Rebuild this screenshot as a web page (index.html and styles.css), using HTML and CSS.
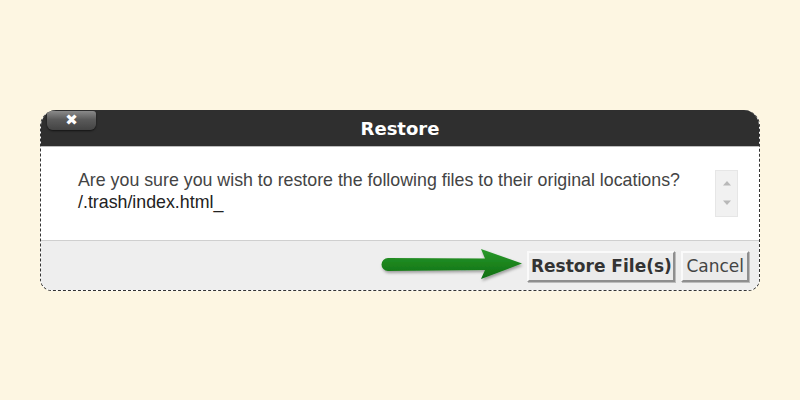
FILE: index.html
```html
<!DOCTYPE html>
<html>
<head>
<meta charset="utf-8">
<link rel="stylesheet" href="styles.css">
</head>
<body>
<div class="dialog">
  <div class="header">
    <div class="close">&#x2716;</div>
    <div class="title">Restore</div>
  </div>
  <div class="body">
    <div class="msg">
      <div>Are you sure you wish to restore the following files to their original locations?</div>
      <div>/.trash/index.html_</div>
    </div>
    <div class="scroll">
      <svg width="10" height="6" viewBox="0 0 10 6"><path d="M1 5.5 L5 1 L9 5.5 Z" fill="#b8b8b8"/></svg>
      <svg width="10" height="6" viewBox="0 0 10 6"><path d="M1 0.5 L5 5 L9 0.5 Z" fill="#b8b8b8"/></svg>
    </div>
  </div>
  <div class="footer">
    <svg class="arrow" width="150" height="36" viewBox="0 0 150 36">
      <defs>
        <filter id="sh" x="-10%" y="-30%" width="120%" height="160%">
          <feDropShadow dx="1" dy="2" stdDeviation="1.5" flood-color="#000" flood-opacity="0.35"/>
        </filter>
        <linearGradient id="g" x1="0" y1="0" x2="0" y2="1">
          <stop offset="0" stop-color="#2a9a2a"/>
          <stop offset="1" stop-color="#0e6e12"/>
        </linearGradient>
      </defs>
      <path filter="url(#sh)" fill="url(#g)" d="M9 10 L106 10.5 L102 1 L143 15.5 L102 31 L106 22 L9 23 A6.5 6.5 0 0 1 9 10 Z"/>
    </svg>
    <button class="btn primary">Restore File(s)</button>
    <button class="btn">Cancel</button>
  </div>
</div>
</body>
</html>
```
FILE: styles.css
```css
html, body {
  margin: 0;
  padding: 0;
}
body {
  background: #fdf6e2;
  width: 800px;
  height: 400px;
  overflow: hidden;
  font-family: "Liberation Sans", Arial, sans-serif;
}
.dialog {
  margin: 110px 0 0 40px;
  width: 718px;
  border: 1px dashed #333;
  border-top: none;
  border-radius: 16px 16px 12px 12px;
  background: #fff;
  overflow: hidden;
}
.header {
  position: relative;
  height: 36px;
  background: #2f2f2f;
  border-bottom: 1px solid #bdbdbd;
  display: flex;
  align-items: center;
  justify-content: center;
}
.close {
  position: absolute;
  left: 6px;
  top: 1px;
  width: 49px;
  height: 19px;
  border-radius: 3px 3px 6px 6px;
  background: linear-gradient(#8a8a8a, #5a5a5a 45%, #444 100%);
  box-shadow: 0 1px 2px rgba(0,0,0,0.6);
  color: #fff;
  font-family: "DejaVu Sans", sans-serif;
  font-size: 15px;
  line-height: 19px;
  text-align: center;
}
.title {
  color: #fff;
  font-family: "DejaVu Sans", Verdana, sans-serif;
  font-weight: bold;
  font-size: 18px;
  margin-top: 1px;
}
.body {
  height: 93px;
  display: flex;
  padding: 0 20px 0 37px;
}
.msg {
  flex: 1;
  padding-top: 22px;
  color: #444;
  font-size: 17.8px;
  line-height: 22px;
}
.msg div + div {
  color: #222;
}
.scroll {
  margin-top: 23px;
  width: 23px;
  height: 47px;
  background: #f1f1f1;
  border: 1px solid #e6e6e6;
  box-sizing: border-box;
  display: flex;
  flex-direction: column;
  align-items: center;
  justify-content: space-between;
  padding: 9px 0 10px;
  margin-right: 1px;
}
.footer {
  position: relative;
  height: 49px;
  background: #eeeeee;
  border-top: 1px solid #cfcfcf;
  display: flex;
  align-items: center;
  justify-content: flex-end;
  gap: 6px;
  padding-right: 10px;
}
.arrow {
  position: absolute;
  left: 338px;
  top: 7px;
}
.btn {
  height: 31px;
  background: #ebebeb;
  border: 2px solid;
  border-color: #fafafa #8e8e8e #8e8e8e #fafafa;
  box-shadow: 1px 1px 0 #bbb;
  font-family: "DejaVu Sans", Verdana, sans-serif;
  font-size: 17px;
  color: #444;
  padding: 0 3px;
  margin-top: 1px;
}
.btn.primary {
  font-weight: bold;
  color: #333;
  width: 148px;
  padding: 0;
}
```
